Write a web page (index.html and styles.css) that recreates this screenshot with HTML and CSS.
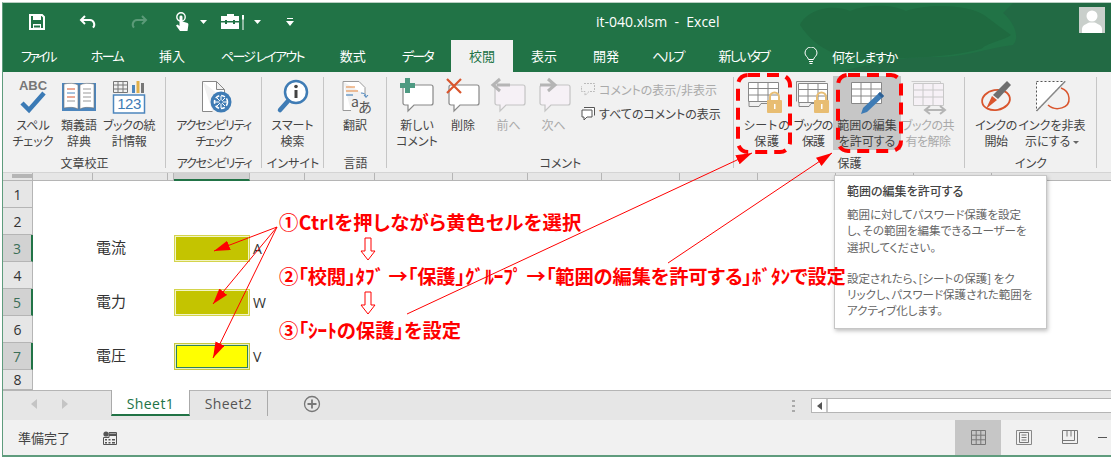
FILE: index.html
```html
<!DOCTYPE html>
<html lang="ja">
<head>
    <meta charset="UTF-8">
    <title>it-040.xlsm - Excel</title>
    <link rel="stylesheet" href="styles.css">
</head>
<body>
<div class="window">

    <!-- title bar -->
    <div class="titlebar">
        <svg class="hills" width="1108" height="69" viewBox="0 0 1108 69">
            <path d="M797 22c6-14 30-22 50-14 14-6 40-8 56 0 24-8 62-6 78 4 8 6 16 12 27 20-8 6-20 6-30 14-40 10-70 8-100 10-30 2-62-4-81-34z" fill="#1f6a40"/>
            <path d="M1010 0h98v69H830c30-4 60-16 100-15 30 1 50-8 80-12 8-8 0-24-10-32z" fill="#226a44"/>
        </svg>
        <div class="qat">
            <svg class="qat-save" width="18" height="18" viewBox="0 0 18 18"><path d="M2 2h12l2 2v12H2z" fill="none" stroke="#fff" stroke-width="2"/><path d="M5 2h8v5H5zM5 11h8v5H5z" fill="#fff"/><path d="M6 12.500h6v2H6z" fill="#217346"/></svg>
            <svg class="qat-undo" width="18" height="18" viewBox="0 0 18 18"><path d="M6 3L2 7l4 4M2.500 7H11a4.500 4.500 0 0 1 3 7.600" fill="none" stroke="#fff" stroke-width="2"/></svg>
            <svg class="qat-undo" width="18" height="18" viewBox="0 0 18 18"><path d="M12 3l4 4-4 4M15.500 7H7a4.500 4.500 0 0 0-3 7.600" fill="none" stroke="#5b9a78" stroke-width="2"/></svg>
            <svg class="qat-touch" width="18" height="20" viewBox="0 0 18 20"><circle cx="7" cy="5" r="4.200" fill="none" stroke="#fff" stroke-width="1.400"/><path d="M5.500 5c0-2 3-2 3 0v4.500l5 1.500c1 .5 1 1.500.8 2.500L13.500 19H6L2 13.500l1.500-1 2 1.500z" fill="#fff"/></svg>
            <svg class="caret" width="7" height="4" viewBox="0 0 7 4"><path d="M0 0h7L3.500 4z" fill="#fff"/></svg>
            <svg class="qat-tools" width="26" height="18" viewBox="0 0 26 18"><path d="M7 3V1h7v2h5v13H1V3z" fill="#fff"/><path d="M1 8h18v1.500H1z" fill="#217346"/><path d="M5 7h2v4H5zM13 7h2v4h-2z" fill="#217346"/><path d="M22 2h2v4l-.5 1v10h-1V7L22 6z" fill="#fff"/></svg>
            <svg class="caret" width="7" height="4" viewBox="0 0 7 4"><path d="M0 0h7L3.500 4z" fill="#fff"/></svg>
            <svg class="qat-custom" width="8" height="8" viewBox="0 0 8 8"><path d="M1 0h6v1H1zM0 3h8L4 8z" fill="#fff"/></svg>
        </div>
        <div class="doc-title">it-040.xlsm &nbsp;-&nbsp; Excel</div>
        <div class="avatar">
            <svg width="26" height="26" viewBox="0 0 26 26"><circle cx="13" cy="9" r="5.500" fill="#fff"/><path d="M3 26v-4c0-4 5-5 7-6.500h6c2 1.500 7 2.500 7 6.500v4z" fill="#fff"/></svg>
        </div>
    </div>

    <!-- ribbon tabs -->
    <div class="tabs">
        <div class="tab kana-file">ファイル</div>
        <div class="tab kana">ホーム</div>
        <div class="tab">挿入</div>
        <div class="tab kana">ページ レイアウト</div>
        <div class="tab">数式</div>
        <div class="tab kana">データ</div>
        <div class="tab active">校閲</div>
        <div class="tab">表示</div>
        <div class="tab">開発</div>
        <div class="tab kana tab-help">ヘルプ</div>
        <div class="tab kana">新しいタブ</div>
        <svg class="bulb" width="14" height="18" viewBox="0 0 14 18"><path d="M4.500 12.500C4 10 1 9 1 6a6 6 0 0 1 12 0c0 3-3 4-3.500 6.500z" fill="none" stroke="#fff"/><path d="M5 14.500h4M5.500 16.500h3" stroke="#fff"/></svg>
        <div class="tell">何をしますか</div>
    </div>

    <!-- ribbon -->
    <div class="ribbon">
        <div class="group g-proof">
            <div class="btns">
                <div class="rb w46">
                    <svg class="ico" viewBox="0 0 40 40"><text x="20" y="14" text-anchor="middle" class="abc">ABC</text><path d="M9 27l7 7L31 17" fill="none" stroke="#3b7ab5" stroke-width="4.500"/></svg>
                    <span>スペル<br>チェック</span>
                </div>
                <div class="rb w46">
                    <svg class="ico" viewBox="0 0 40 40"><path d="M3 7h34v28H3z" fill="#4d86bd"/><path d="M5 8c5-1 11-1 14 1v24c-3-2-9-2-14-1zM35 8c-5-1-11-1-14 1v24c3-2 9-2 14-1z" fill="#fff" stroke="#777" stroke-width=".6"/><path d="M8 13h8" stroke="#d9552d"/><path d="M8 17h8" stroke="#4d86bd"/><path d="M8 21h8" stroke="#d9552d"/><path d="M8 25h8" stroke="#999"/><path d="M24 13h8M24 17h8M24 21h8M24 25h8" stroke="#999"/></svg>
                    <span>類義語<br>辞典</span>
                </div>
                <div class="rb w54 tight-s">
                    <svg class="ico" viewBox="0 0 40 40"><path d="M4.500 5.500h14v11h-14zM4.500 9h14M4.500 13h14M9 5.500v11M14 5.500v11" fill="none" stroke="#777"/><path d="M23 9h3v8h-3z" fill="#4d86bd"/><path d="M27.500 5h3v12h-3z" fill="#e0b04a"/><path d="M32 7h3v10h-3z" fill="#777"/><rect x="4.500" y="19" width="31" height="18" fill="#fff" stroke="#4d86bd" stroke-width="1.500"/><text x="20" y="33" text-anchor="middle" class="num">123</text></svg>
                    <span>ブックの統<br>計情報</span>
                </div>
            </div>
            <div class="group-name">文章校正</div>
        </div>
        <div class="group g-access">
            <div class="btns">
                <div class="rb w95 tight">
                    <svg class="ico" viewBox="0 0 40 40"><path d="M8.500 5.500h14l8 8v10M8.500 5.500v30h10M22.500 5.500v8h8" fill="#fff" stroke="#888"/><circle cx="27" cy="26" r="10.500" fill="#3f7cb5"/><circle cx="27" cy="26" r="6.500" fill="none" stroke="#fff" stroke-width="1.600" stroke-dasharray="4 2"/><path d="M27 20v12M21 26h12M23 22l8 8M31 22l-8 8" stroke="#fff"/><circle cx="27" cy="26" r="1.800" fill="#3f7cb5"/></svg>
                    <span>アクセシビリティ<br>チェック</span>
                </div>
            </div>
            <div class="group-name tight">アクセシビリティ</div>
        </div>
        <div class="group g-insight">
            <div class="btns">
                <div class="rb w61">
                    <svg class="ico" viewBox="0 0 40 40"><circle cx="23" cy="16" r="11" fill="#fff" stroke="#3f7cb5" stroke-width="2.500"/><path d="M15 25L7 34" stroke="#3f7cb5" stroke-width="4.500" stroke-linecap="round"/><circle cx="23" cy="10.500" r="1.800" fill="#444"/><path d="M21.500 14h3v8h-3z" fill="#444"/></svg>
                    <span>スマート<br>検索</span>
                </div>
            </div>
            <div class="group-name">インサイト</div>
        </div>
        <div class="group g-lang">
            <div class="btns">
                <div class="rb w62">
                    <svg class="ico" viewBox="0 0 40 40"><path d="M8 5.500h16l6 6v7M8 5.500v29h8" fill="#fff" stroke="#999"/><path d="M11 11h9M11 15h12" stroke="#e8853a" stroke-width="1.200"/><path d="M11 19h7" stroke="#4d86bd" stroke-width="1.200"/><path d="M26 17c3 0 5 1 5 4M29 19l2 2.500 2-2.500" fill="none" stroke="#4d86bd"/><text x="16" y="31" class="tr">a</text><text x="23" y="36" class="tr">あ</text></svg>
                    <span>翻訳</span>
                </div>
            </div>
            <div class="group-name">言語</div>
        </div>
        <div class="group g-comment">
            <div class="btns">
                <div class="rb w46">
                    <svg class="ico" viewBox="0 0 40 40"><path d="M8 9h26a2 2 0 0 1 2 2v16a2 2 0 0 1-2 2H17l-6 6v-6H8a2 2 0 0 1-2-2V11a2 2 0 0 1 2-2z" fill="#fff" stroke="#888" stroke-width="1.200"/><path d="M8 2h5v5h5v5h-5v5H8v-5H3V7h5z" fill="#4e9a82"/></svg>
                    <span>新しい<br>コメント</span>
                </div>
                <div class="rb w46">
                    <svg class="ico" viewBox="0 0 40 40"><path d="M8 9h26a2 2 0 0 1 2 2v16a2 2 0 0 1-2 2H17l-6 6v-6H8a2 2 0 0 1-2-2V11a2 2 0 0 1 2-2z" fill="#fff" stroke="#888" stroke-width="1.200"/><path d="M4 3l14 14M18 3L4 17" stroke="#d9552d" stroke-width="2.200"/></svg>
                    <span>削除</span>
                </div>
                <div class="rb w45 off">
                    <svg class="ico" viewBox="0 0 40 40"><path d="M8 9h26a2 2 0 0 1 2 2v16a2 2 0 0 1-2 2H17l-6 6v-6H8a2 2 0 0 1-2-2V11a2 2 0 0 1 2-2z" fill="#f6f1f6" stroke="#c4c4c4" stroke-width="1.200"/><path d="M21 9H8M11 3L4 9l7 6" fill="none" stroke="#b5b5b5" stroke-width="3"/></svg>
                    <span>前へ</span>
                </div>
                <div class="rb w45 off">
                    <svg class="ico" viewBox="0 0 40 40"><path d="M8 9h26a2 2 0 0 1 2 2v16a2 2 0 0 1-2 2H17l-6 6v-6H8a2 2 0 0 1-2-2V11a2 2 0 0 1 2-2z" fill="#f6f1f6" stroke="#c4c4c4" stroke-width="1.200"/><path d="M6 9h13M14 3l7 6-7 6" fill="none" stroke="#b5b5b5" stroke-width="3"/></svg>
                    <span>次へ</span>
                </div>
                <div class="small-list">
                    <div class="small off">
                        <svg width="16" height="16" viewBox="0 0 16 16"><path d="M4 1.500h10.500v8H9l-4 4v-4H1.500V4" fill="none" stroke="#bbb" stroke-dasharray="2 1"/></svg>
                        コメントの表示/非表示
                    </div>
                    <div class="small">
                        <svg width="16" height="16" viewBox="0 0 16 16"><path d="M4 1.500h10.500v8M2 4h10v7H7l-3 3v-3H2z" fill="#fff" stroke="#555"/></svg>
                        すべてのコメントの表示
                    </div>
                </div>
            </div>
            <div class="group-name">コメント</div>
        </div>
        <div class="group g-protect">
            <div class="btns">
                <div class="rb w46 wide">
                    <svg class="ico" viewBox="0 0 40 40"><path d="M1.500 6.500h30v19h-30zM1.500 12.500h30M1.500 19h30M11 6.500v19M21 6.500v19" fill="#fff" stroke="#888"/><path d="M2 25.500v5h10l2-3h8" fill="none" stroke="#888"/><rect x="20" y="24" width="15" height="13" rx="1" fill="#e8bd72"/><path d="M23 24v-3a4.500 4.500 0 0 1 9 0v3" fill="none" stroke="#e8bd72" stroke-width="2"/><path d="M27 28h1.500v5H27z" fill="#fff"/></svg>
                    <span>シートの<br>保護</span>
                </div>
                <div class="rb w46 tuck">
                    <svg class="ico" viewBox="0 0 40 40"><path d="M3.500 5.500h29M3.500 5.500v20" fill="none" stroke="#888"/><path d="M5.500 7.500h29v19h-29zM5.500 13.500h29M5.500 20h29M15 7.500v19M25 7.500v19" fill="#fff" stroke="#888"/><path d="M6 26.500v4h10l2-3h6" fill="none" stroke="#888"/><rect x="21" y="24" width="15" height="13" rx="1" fill="#e8bd72"/><path d="M24 24v-3a4.500 4.500 0 0 1 9 0v3" fill="none" stroke="#e8bd72" stroke-width="2"/><path d="M28 28h1.500v5H28z" fill="#fff"/></svg>
                    <span>ブックの<br>保護</span>
                </div>
                <div class="rb w68 pressed">
                    <svg class="ico" viewBox="0 0 40 40"><path d="M4.500 6.500h30v21h-30zM4.500 13h30M4.500 20h30M14 6.500v21M24 6.500v21" fill="#fff" stroke="#888"/><path d="M33 16l4 4-17 16-6 2 2-6z" fill="#3f7cb5"/><path d="M33 16l4 4-2 2-4-4z" fill="#2d5f92"/></svg>
                    <span>範囲の編集<br>を許可する</span>
                </div>
                <div class="rb w54 off tight-s">
                    <svg class="ico" viewBox="0 0 40 40"><path d="M3.500 5.500h29v20" fill="none" stroke="#ccc"/><path d="M5.500 7.500h30v22h-30zM5.500 14h30M5.500 21h30M15 7.500v22M25 7.500v22" fill="#f6f1f6" stroke="#c8c8c8"/><path d="M18 34h18M22 30l-5 4 5 4M32 30l5 4-5 4" fill="none" stroke="#b5b5b5" stroke-width="2"/></svg>
                    <span>ブックの共<br>有を解除</span>
                </div>
            </div>
            <div class="group-name">保護</div>
        </div>
        <div class="group g-ink">
            <div class="btns">
                <div class="rb w50 tight-s">
                    <svg class="ico" viewBox="0 0 40 40"><ellipse cx="20" cy="24" rx="14" ry="10" transform="rotate(-10 20 24)" fill="none" stroke="#d9552d" stroke-width="1.800"/><path d="M31 5l4 4-13 14-5-4z" fill="#6f6f6f"/><path d="M16 20l5 4-5 4-6 5z" fill="#d9552d"/></svg>
                    <span>インクの<br>開始</span>
                </div>
                <div class="rb w62">
                    <svg class="ico" viewBox="0 0 40 40"><path d="M4.500 5.500h28.500L4.500 35z" fill="#fff" stroke="#555" stroke-dasharray="2 2"/><path d="M33 5.500L4.500 35" stroke="#888" stroke-width="1.500"/><path d="M16 29c8 7 22 3 21-7-.5-6-5-9-8-10" fill="none" stroke="#d9552d" stroke-width="1.500"/></svg>
                    <span>インクを非表<br>示にする <i class="down-caret"></i></span>
                </div>
            </div>
            <div class="group-name">インク</div>
        </div>
    </div>

    <!-- worksheet -->
    <div class="sheet">
        <div class="colhead">
            <div class="corner"></div><div class="col ca"></div><div class="col cb"></div><div class="col cn"></div><div class="col cc selected"></div><div class="col cd"></div><div class="col ce"></div><div class="col cf"></div><div class="col cg"></div><div class="col ch"></div><div class="col ci"></div><div class="col cj"></div><div class="col ck"></div><div class="col cl"></div><div class="col cm"></div>
        </div>
        <div class="row"><div class="rowhead">1</div></div>
        <div class="row"><div class="rowhead">2</div></div>
        <div class="row"><div class="rowhead on">3</div><div class="label">電流</div><div class="cell olive"></div><div class="unit">A</div></div>
        <div class="row"><div class="rowhead">4</div></div>
        <div class="row"><div class="rowhead on">5</div><div class="label">電力</div><div class="cell olive"></div><div class="unit">W</div></div>
        <div class="row"><div class="rowhead">6</div></div>
        <div class="row"><div class="rowhead on">7</div><div class="label">電圧</div><div class="cell current"></div><div class="unit">V</div></div>
        <div class="row last"><div class="rowhead">8</div></div>
    </div>

    <!-- sheet tabs and scrollbar -->
    <div class="sheetbar">
        <div class="sheet-nav">
            <svg width="6" height="10" viewBox="0 0 6 10"><path d="M6 0v10L0 5z" fill="#c4c4c4"/></svg>
            <svg width="6" height="10" viewBox="0 0 6 10"><path d="M0 0v10l6-5z" fill="#c4c4c4"/></svg>
        </div>
        <div class="stab current-tab">Sheet1</div>
        <div class="stab">Sheet2</div>
        <svg class="plus" width="18" height="18" viewBox="0 0 18 18"><circle cx="9" cy="9" r="7.500" fill="none" stroke="#777" stroke-width="1.300"/><path d="M9 4.500v9M4.500 9h9" stroke="#777" stroke-width="1.800"/></svg>
        <div class="grip"><i></i><i></i><i></i></div>
        <div class="hscroll"><div class="hscroll-btn"><svg width="5" height="8" viewBox="0 0 5 8"><path d="M5 0v8L0 4z" fill="#555"/></svg></div></div>
    </div>

    <!-- status bar -->
    <div class="status">
        <div class="ready">準備完了</div>
        <svg class="macro" width="14" height="14" viewBox="0 0 14 14"><circle cx="3" cy="3" r="2.600" fill="#555"/><path d="M6 1.500h7.500V13.500H.5V6.500H6z" fill="none" stroke="#555"/><path d="M6 2.500h7V5H6zM2 8h2v1.500H2zM5.500 8h2v1.500h-2zM9 8h3v1.500H9zM2 11h2v1.500H2zM5.500 11h2v1.500h-2zM9 11h3v1.500H9z" fill="#555"/></svg>
        <div class="views">
            <div class="view on">
                <svg width="15" height="15" viewBox="0 0 15 15"><path d="M.5.500h14v14H.5zM.5 5.200h14M.5 9.800h14M5.200.500v14M9.800.500v14" fill="none" stroke="#777"/></svg>
            </div>
            <div class="view">
                <svg width="16" height="15" viewBox="0 0 16 15"><path d="M.5.500h15v14H.5z" fill="none" stroke="#888"/><path d="M3.500 2.500h9v10h-9zM5.500 5h5M5.500 7.500h5M5.500 10h5" fill="none" stroke="#777"/></svg>
            </div>
            <div class="view">
                <svg width="16" height="15" viewBox="0 0 16 15"><path d="M.5.500h15v13H.5zM.5 10.500h12V.500M5 .500v6M9 .500v6" fill="none" stroke="#777"/></svg>
            </div>
            <div class="zoom-minus"></div>
        </div>
    </div>
</div>

<!-- hover tip for the range button -->
<div class="tip">
    <div class="tip-title">範囲の編集を許可する</div>
    <p>範囲に対してパスワード保護を設定<br>し、その範囲を編集できるユーザーを<br>選択してください。</p>
    <p>設定されたら、[シートの保護] をク<br>リックし、パスワード保護された範囲を<br>アクティブ化します。</p>
</div>

<!-- red callouts drawn on top of the window -->
<svg class="callouts" width="1111" height="459" viewBox="0 0 1111 459">
    <defs>
        <marker id="head" markerWidth="18" markerHeight="12" refX="16" refY="5" orient="auto" markerUnits="userSpaceOnUse"><path d="M0 0l16 5-16 5z" fill="#f00"/></marker>
    </defs>
    <rect x="738" y="75" width="52" height="77" rx="10" class="dash"/>
    <rect x="838" y="75" width="63" height="76" rx="10" class="dash"/>
    <g class="leader">
        <path d="M277 227L214 251" marker-end="url(#head)"/>
        <path d="M277 227L213 304" marker-end="url(#head)"/>
        <path d="M277 227L213 358" marker-end="url(#head)"/>
        <path d="M407 314L752 153" marker-end="url(#head)"/>
        <path d="M668 263L832 153" marker-end="url(#head)"/>
    </g>
</svg>

<div class="notes">
    <div class="note note-wide">①Ctrlを押しながら黄色セルを選択</div>
    <svg class="down" width="16" height="24" viewBox="0 0 16 24"><path d="M5 1h6v13h4l-7 9-7-9h4z" fill="#fff" stroke="#f00"/></svg>
    <div class="note note-tight">②「校閲」ﾀﾌﾞ →「保護」ｸﾞﾙｰﾌﾟ →「範囲の編集を許可する」ﾎﾞﾀﾝで設定</div>
    <svg class="down" width="16" height="24" viewBox="0 0 16 24"><path d="M5 1h6v13h4l-7 9-7-9h4z" fill="#fff" stroke="#f00"/></svg>
    <div class="note">③「ｼｰﾄの保護」を設定</div>
</div>
</body>
</html>
```
FILE: styles.css
```css
* {
    box-sizing: border-box;
}
body {
    margin: 0;
    width: 1111px;
    height: 459px;
    position: relative;
    overflow: hidden;
    background-color: #fff;
    font-family: "Noto Sans CJK JP", "Noto Sans", sans-serif;
    font-feature-settings: "palt";
    color: #444;
}
.window {
    margin: 2px 0 0 2px;
    height: 455px;
    display: flex;
    flex-direction: column;
    background-color: #217346;
    border-left: 1px solid #5f9c7d;
    border-top: 1px solid #b9cfc3;
    border-bottom: 2px solid #5f9c7d;
    overflow: hidden;
}

/* title bar */
.titlebar {
    height: 37px;
    flex: none;
    display: flex;
    align-items: center;
    position: relative;
    color: #fff;
}
.hills {
    position: absolute;
    left: 0;
    top: 0;
}
.qat {
    display: flex;
    align-items: center;
    padding-left: 25px;
    position: relative;
}
.qat-undo {
    margin-left: 33px;
}
.qat-touch {
    margin-left: 26px;
}
.caret {
    margin-left: 8px;
}
.qat-tools {
    margin-left: 13px;
}
.qat-custom {
    margin-left: 25px;
}
.doc-title {
    margin-left: 302px;
    font-family: "Open Sans", sans-serif;
    font-size: 14px;
    position: relative;
    white-space: nowrap;
}
.avatar {
    position: absolute;
    right: 6px;
    top: 4px;
    width: 26px;
    height: 26px;
    background-color: #c9cfcb;
}

/* ribbon tabs */
.tabs {
    height: 32px;
    flex: none;
    display: flex;
    align-items: center;
    color: #fff;
    font-size: 13px;
    position: relative;
}
.tab {
    height: 32px;
    line-height: 32px;
    padding: 0 18px;
    white-space: nowrap;
}
.kana {
    letter-spacing: -1.700px;
}
.kana-file {
    letter-spacing: -2.800px;
}
.tab-help {
    padding: 0 17px 0 15px;
    letter-spacing: -2px;
}
.tab.active {
    background-color: #f1f1f1;
    color: #217346;
}
.bulb {
    margin-left: 17px;
}
.tell {
    margin-left: 14px;
    letter-spacing: -1.200px;
}

/* ribbon */
.ribbon {
    height: 100px;
    flex: none;
    display: flex;
    background-color: #f1f1f1;
    font-size: 12px;
    line-height: 16px;
}
.group {
    display: flex;
    flex-direction: column;
    flex: none;
    padding-top: 4px;
    position: relative;
}
.group::after {
    content: "";
    position: absolute;
    right: 0;
    top: 5px;
    bottom: 4px;
    width: 1px;
    background-color: #c6c6c6;
}
.g-proof {
    width: 163px;
    padding-left: 7px;
}
.g-access {
    width: 96px;
}
.g-insight {
    width: 62px;
}
.g-lang {
    width: 63px;
}
.g-comment {
    width: 347px;
    padding-left: 7px;
}
.g-protect {
    width: 231px;
    padding-left: 10px;
}
.g-ink {
    width: 132px;
    padding-left: 6px;
}
.btns {
    height: 74px;
    display: flex;
}
.group-name {
    margin-top: 5px;
    text-align: center;
    white-space: nowrap;
}
.g-proof .group-name,
.g-comment .group-name {
    margin-left: -7px;
}
.g-protect .group-name {
    margin-left: -10px;
}
.g-ink .group-name {
    margin-left: -6px;
}
.rb {
    flex: none;
    height: 74px;
    display: flex;
    flex-direction: column;
    align-items: center;
    text-align: center;
    white-space: nowrap;
}
.rb span {
    display: block;
    margin-top: 1px;
}
.tight {
    letter-spacing: -1.200px;
}
.tight-s {
    letter-spacing: -.5px;
}
.wide {
    letter-spacing: .8px;
}
.ico {
    width: 40px;
    height: 40px;
    flex: none;
    overflow: visible;
}
.w45 { width: 45px; }
.w46 { width: 46px; }
.w50 { width: 50px; }
.w54 { width: 54px; }
.w61 { width: 61px; }
.w62 { width: 62px; }
.w68 { width: 68px; }
.w95 { width: 95px; }
.tuck {
    margin-right: -3px;
    letter-spacing: -1px;
}
.pressed {
    background-color: #c6c6c6;
}
.off {
    color: #aaa;
}
.abc {
    font: bold 13px "Liberation Sans", sans-serif;
    fill: #777;
}
.num {
    font: 15px "Liberation Sans", sans-serif;
    fill: #3f7cb5;
}
.tr {
    font: 14px "Noto Sans CJK JP", sans-serif;
    fill: #555;
}
.small-list {
    margin-left: 4px;
    padding-top: 2px;
}
.small {
    display: flex;
    align-items: center;
    gap: 3px;
    height: 24px;
    white-space: nowrap;
}
.down-caret {
    display: inline-block;
    border: 3px solid transparent;
    border-top-color: #666;
    border-bottom: 0;
    vertical-align: middle;
}

/* worksheet */
.sheet {
    height: 218px;
    flex: none;
    background-color: #fff;
}
.colhead {
    height: 9px;
    display: flex;
    background-color: #e6e6e6;
    border-top: 1px solid #d4d4d4;
    border-bottom: 1px solid #b5b5b5;
}
.corner {
    width: 30px;
    border-right: 1px solid #b5b5b5;
    position: relative;
}
.corner::after {
    content: "";
    position: absolute;
    left: 9px;
    top: 1px;
    width: 20px;
    height: 4px;
    background-color: #b5b5b5;
}
.col {
    flex: none;
    border-right: 1px solid #b5b5b5;
}
.col.selected {
    background-color: #d2d2d2;
    border-bottom: 2px solid #217346;
    margin-bottom: -1px;
}
.ca { width: 60px; }
.cb { width: 75px; }
.cn { width: 6px; }
.cc { width: 76px; }
.cd { width: 55px; }
.ce { width: 70px; }
.cf { width: 78px; }
.cg { width: 75px; }
.ch { width: 74px; }
.ci { width: 78px; }
.cj { width: 78px; }
.ck { width: 78px; }
.cl { width: 78px; }
.cm { width: 78px; }
.row {
    height: 27px;
    display: grid;
    grid-template-columns: 30px 60px 81px 76px 1fr;
    align-items: center;
}
.row.last {
    height: 20px;
}
.rowhead {
    height: 100%;
    display: flex;
    align-items: center;
    justify-content: center;
    background-color: #e6e6e6;
    border-right: 1px solid #b5b5b5;
    border-bottom: 1px solid #b5b5b5;
    font: 14px "Open Sans", sans-serif;
    color: #333;
}
.rowhead.on {
    background-color: #d2d2d2;
    border-right: 2px solid #217346;
    color: #3c6f58;
}
.label {
    grid-column: 3;
    padding: 0 0 5px 3px;
    font-size: 15px;
    color: #333;
}
.cell {
    height: 100%;
}
.cell.olive {
    background-color: #c4c400;
    border: 1px solid #d4d44c;
    box-shadow: inset 0 0 0 1px #f2f4c4;
}
.cell.current {
    background-color: #ff0;
    border: 1px solid #c8c83c;
    box-shadow: inset 0 0 0 1px #e8f0c0, inset 0 0 0 2px #2f7f60;
}
.unit {
    padding: 0 0 1px 3px;
    font: 14px "Open Sans", sans-serif;
    color: #333;
}

/* sheet tabs */
.sheetbar {
    height: 30px;
    flex: none;
    display: flex;
    align-items: flex-start;
    background-color: #e6e6e6;
    border-top: 1px solid #b5b5b5;
}
.sheet-nav {
    width: 108px;
    height: 26px;
    display: flex;
    align-items: center;
    gap: 25px;
    padding-left: 28px;
}
.stab {
    width: 78px;
    height: 25px;
    text-align: center;
    font: 14px/25px "Open Sans", sans-serif;
    color: #555;
    border-right: 1px solid #aaa;
    letter-spacing: .4px;
}
.current-tab {
    width: 79px;
    height: 26px;
    margin-top: -1px;
    line-height: 27px;
    background-color: #fff;
    color: #217346;
    border-left: 1px solid #aaa;
    border-bottom: 2px solid #217346;
}
.plus {
    margin: 4px 0 0 35px;
}
.grip {
    margin: 9px 0 0 471px;
    display: flex;
    flex-direction: column;
    gap: 3px;
}
.grip i {
    width: 3px;
    height: 2px;
    background-color: #aaa;
}
.hscroll {
    margin: 7px 0 0 16px;
    flex: 1;
    height: 15px;
    background-color: #fff;
    border: 1px solid #b5b5b5;
    border-right: 0;
}
.hscroll-btn {
    width: 16px;
    height: 13px;
    display: flex;
    align-items: center;
    justify-content: center;
    border-right: 2px solid #c6c6c6;
}

/* status bar */
.status {
    flex: 1;
    display: flex;
    align-items: center;
    background-color: #f1f1f1;
    font-size: 13px;
}
.ready {
    margin-left: 15px;
    color: #444;
}
.macro {
    margin-left: 33px;
}
.views {
    margin-left: auto;
    display: flex;
    align-items: center;
    height: 100%;
}
.view {
    width: 46px;
    height: 100%;
    display: flex;
    align-items: center;
    justify-content: center;
}
.view.on {
    background-color: #c6c6c6;
}
.zoom-minus {
    width: 9px;
    height: 1px;
    margin: 0 4px 0 5px;
    background-color: #555;
}

/* hover tip */
.tip {
    position: absolute;
    left: 834px;
    top: 175px;
    width: 213px;
    height: 154px;
    padding: 6px 12px;
    background-color: #fff;
    border: 1px solid #c6c6c6;
    box-shadow: 1px 2px 4px rgba(0, 0, 0, .25);
    font-size: 11.500px;
    line-height: 16.300px;
    color: #666;
    white-space: nowrap;
}
.tip-title {
    font-size: 12px;
    font-weight: 500;
    line-height: 18px;
    color: #444;
    margin-bottom: 6px;
}
.tip p {
    margin: 0 0 15px;
}

/* red callouts */
.callouts {
    position: absolute;
    left: 0;
    top: 0;
}
.dash {
    fill: none;
    stroke: #f00;
    stroke-width: 4;
    stroke-dasharray: 12 7;
}
.leader path {
    fill: none;
    stroke: #f00;
    stroke-width: 1;
}
.notes {
    position: absolute;
    left: 279px;
    top: 209px;
    color: #f00;
    font-size: 19.300px;
    font-weight: 700;
    white-space: nowrap;
}
.note {
    height: 26px;
    line-height: 26px;
}
.note-wide {
    letter-spacing: .35px;
}
.note-tight {
    letter-spacing: -.12px;
}
.down {
    display: block;
    margin: 2px 0 2px 81px;
}
```
